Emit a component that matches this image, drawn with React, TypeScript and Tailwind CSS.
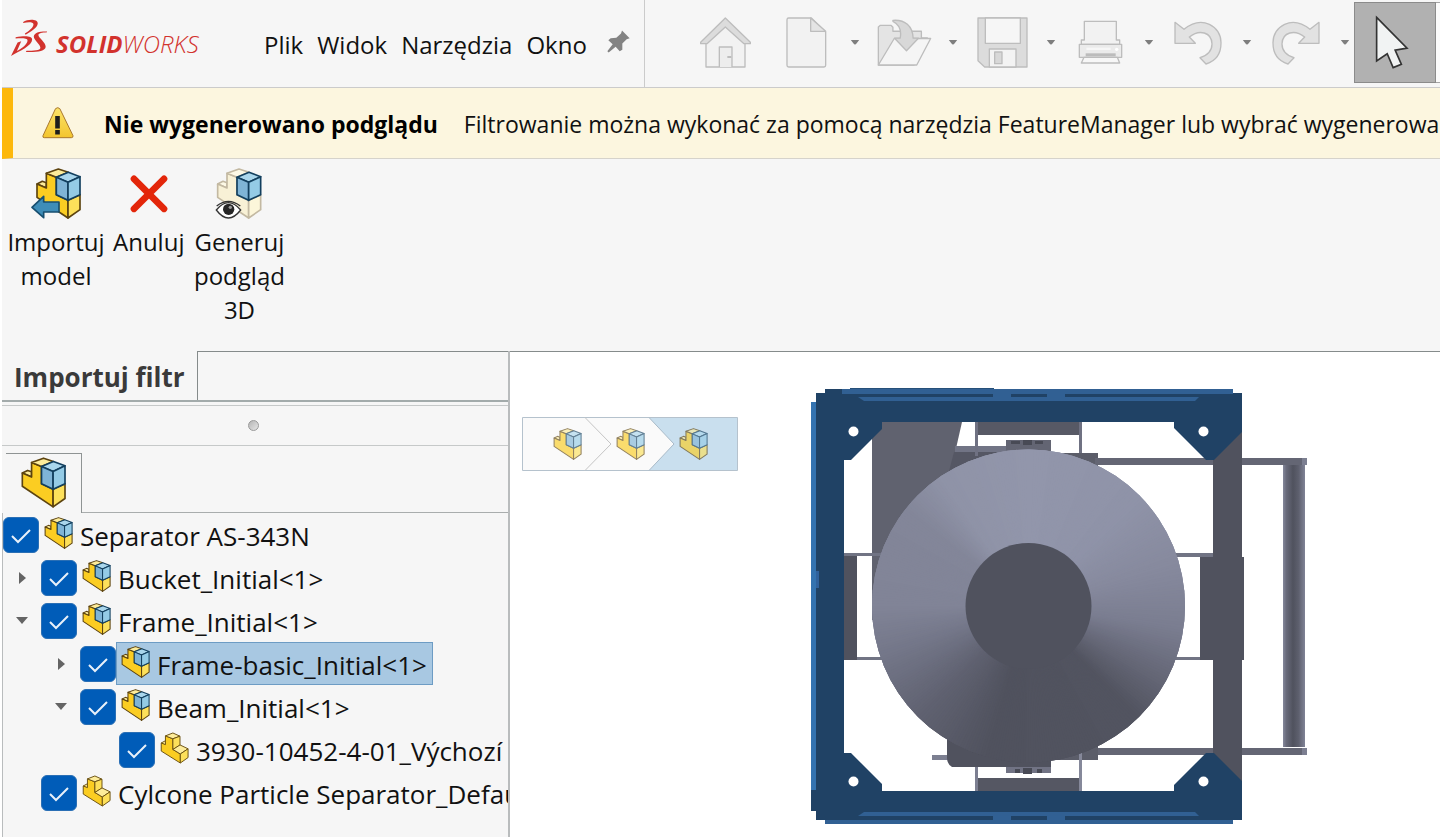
import { useState } from "react";
import type { ReactNode } from "react";

interface TreeItem {
	id: string;
	label: string;
	level: number;
	kind: "assembly" | "part";
	open?: boolean;
}

const treeItems: TreeItem[] = [
	{ id: "root", label: "Separator AS-343N", level: 0, kind: "assembly" },
	{ id: "bucket", label: "Bucket_Initial<1>", level: 1, kind: "assembly", open: false },
	{ id: "frame", label: "Frame_Initial<1>", level: 1, kind: "assembly", open: true },
	{ id: "basic", label: "Frame-basic_Initial<1>", level: 2, kind: "assembly", open: false },
	{ id: "beam", label: "Beam_Initial<1>", level: 2, kind: "assembly", open: true },
	{ id: "3930", label: "3930-10452-4-01_Výchozí", level: 3, kind: "part" },
	{ id: "cyclone", label: "Cylcone Particle Separator_Default", level: 1, kind: "part" },
];

const indents = ["pl-0", "pl-0", "pl-[39px]", "pl-[78px]"];

const AssemblyShape = ({ pale = false }: { pale?: boolean }) => {
	const line = pale ? "#c3b9a2" : "#5c430f";
	return (
		<g strokeLinejoin="round" strokeWidth="5">
			<g stroke={line}>
				<path d="M4 48 20 40 32 44V60Z" fill={pale ? "#fdf9e6" : "#fdec9a"} />
				<path d="M4 48 32 60V16L62 28V80L97 97V150L4 88Z" fill={pale ? "#f8f1d6" : "#fbcd22"} />
				<path d="M32 16 68 3 98 13 62 28Z" fill={pale ? "#fdf9e6" : "#fdec9a"} />
				<path d="M97 97 133 80V125L97 150Z" fill={pale ? "#fcf6da" : "#fde05a"} />
			</g>
			<g stroke="#123f5e">
				<path d="M62 28 98 13 133 26 97 43Z" fill="#a9d6ec" />
				<path d="M62 28 97 43V97L62 80Z" fill="#7fb4d6" />
				<path d="M97 43 133 26V80L97 97Z" fill="#94cbe6" />
			</g>
		</g>
	);
};

const AssemblyIcon = ({ className }: { className?: string }) => (
	<svg viewBox="0 0 136 153" className={className} aria-hidden="true">
		<AssemblyShape />
	</svg>
);

const PartIcon = ({ className }: { className?: string }) => (
	<svg viewBox="481 672 88 99" className={className} aria-hidden="true">
		<g stroke="#6b5212" strokeWidth="3" strokeLinejoin="round">
			<path d="M484 706 497 699 503 703 497 713Z" fill="#fdec9a" />
			<path d="M484 706 497 711V684L520 693V726L543 740V768L484 731Z" fill="#fbcd22" />
			<path d="M497 684 520 675 542 685 520 693Z" fill="#fdec9a" />
			<path d="M520 693 542 685V713L520 726Z" fill="#fde05a" />
			<path d="M520 726 542 712 567 724 543 740Z" fill="#fdec9a" />
			<path d="M543 740 567 724V751L543 768Z" fill="#fde05a" />
		</g>
	</svg>
);

const DsLogo = () => (
	<svg viewBox="30 52 115 116" className="h-[39px] w-[38px]" aria-hidden="true">
		<g fill="#d2322d">
			<path d="M70 63C83 54 114 53 114 67C114 82 90 93 77 102L75 98C88 90 101 80 101 70C100 62 84 63 70 66Z" />
			<path d="M47 109C74 104 97 104 97 116C97 135 60 150 33 166L53 125L64 121L51 151C66 143 83 130 83 119C83 112 67 112 47 113Z" />
			<path d="M142 94C126 95 117 97 116 102C115 111 138 124 138 138C137 152 111 155 78 154L80 150C101 150 122 150 122 141C122 131 102 118 102 107C103 94 124 91 142 92Z" />
		</g>
	</svg>
);

const PinIcon = () => (
	<svg viewBox="867 91 69 68" className="h-[23px] w-[23px]" aria-hidden="true">
		<path
			d="M912 92 935 115 926 118 913 131V150L905 154 893 141 872 158 868 154 884 133 871 121 878 115 895 114 909 101Z"
			fill="#838383"
		/>
	</svg>
);

const WarningIcon = () => (
	<svg viewBox="127 319 97 97" className="h-8 w-8 shrink-0" aria-hidden="true">
		<defs>
			<linearGradient id="warn" x1="0" y1="0" x2="0" y2="1">
				<stop offset="0" stopColor="#fbe36a" />
				<stop offset="1" stopColor="#f3c52e" />
			</linearGradient>
		</defs>
		<path
			d="M168 324Q175 318 181 324L221 406Q222 412 216 412H134Q128 412 130 406Z"
			fill="url(#warn)"
			stroke="#a8762c"
			strokeWidth="3"
		/>
		<path d="M167 346H181V384H167ZM167 389H181V402H167Z" fill="#1d1d1d" />
	</svg>
);

const Gray = ({ viewBox, className, children }: { viewBox: string; className: string; children: ReactNode }) => (
	<svg viewBox={viewBox} className={className} aria-hidden="true">
		<g fill="#f2f2f2" stroke="#bdbdbd" strokeWidth="4" strokeLinejoin="round">
			{children}
		</g>
	</svg>
);

const HomeIcon = () => (
	<Gray viewBox="60 50 153 153" className="h-[51px] w-[51px]">
		<path d="M78 120 136 72 195 120V200H78Z" />
		<path d="M136 53 211 126V130H192L136 80 81 130H62V126Z" fill="#dcdcdc" />
		<path d="M118 200V140H156V200" fill="#ededed" />
		<path d="M142 167H154V173H142Z" fill="#bdbdbd" stroke="none" />
	</Gray>
);

const NewIcon = () => (
	<Gray viewBox="315 50 123 153" className="h-[51px] w-[41px]">
		<path d="M323 53H391L434 95V195Q434 200 429 200H323Q318 200 318 195V58Q318 53 323 53Z" />
		<path d="M389 53V93H434Z" fill="#e4e4e4" />
	</Gray>
);

const OpenIcon = () => (
	<Gray viewBox="588 55 166 145" className="h-12 w-[55px]">
		<path d="M592 194V79L598 74H630L636 80V92H722V112H740L700 194Z" fill="#e4e4e4" />
		<path d="M592 194 640 114H750L708 194Z" fill="#f5f5f5" />
		<path d="M636 59C672 56 696 76 697 113H713L677 151 641 113H658C662 92 656 72 636 62Z" fill="#d8d8d8" />
	</Gray>
);

const SaveIcon = () => (
	<Gray viewBox="888 50 153 153" className="h-[51px] w-[51px]">
		<path d="M891 53H1038V200H911L891 181Z" fill="#dcdcdc" />
		<path d="M913 53H1018V129H913Z" fill="#f6f6f6" />
		<path d="M925 200V146H1005V200Z" fill="#f3f3f3" />
		<path d="M941 155H963V190H941Z" fill="#d8d8d8" />
	</Gray>
);

const PrintIcon = () => (
	<Gray viewBox="52 60 135 135" className="h-[45px] w-[45px]">
		<path d="M62 133V120H71V64H167V120H177V133Z" />
		<path d="M56 133H183V172H56Z" fill="#ebebeb" />
		<path d="M77 143H150V150H77Z" fill="#f7f7f7" stroke="none" />
		<path d="M75 160H165V169H75Z" fill="#bcbcbc" stroke="none" />
		<path d="M70 172H170L177 189H62Z" fill="#f7f7f7" />
		<circle cx="168" cy="148" r="5" fill="#fff" stroke="none" />
	</Gray>
);

const UndoShape = () => (
	<path
		d="M345 67 372 88C426 44 484 78 483 129C483 164 464 184 438 192L420 173C446 165 456 151 456 132C455 96 418 87 388 111L406 130H345Z"
		fill="#e2e2e2"
	/>
);

const UndoIcon = () => (
	<Gray viewBox="342 63 144 132" className="h-11 w-12">
		<UndoShape />
	</Gray>
);

const RedoIcon = () => (
	<Gray viewBox="342 63 144 132" className="h-11 w-12">
		<g transform="matrix(-1 0 0 1 828 0)">
			<UndoShape />
		</g>
	</Gray>
);

const Caret = () => (
	<svg viewBox="0 0 10 6" className="h-[5px] w-[10px] shrink-0" aria-hidden="true">
		<path d="M0 0H10L7 4Q5 7 3 4Z" fill="#7e7e7e" />
	</svg>
);

const CursorIcon = () => (
	<svg viewBox="945 44 106 164" className="h-[55px] w-[35px]" aria-hidden="true">
		<path
			d="M953 50 1045 143 1009 149 1028 192 1003 202 985 160 953 182Z"
			fill="#f1f3f3"
			stroke="#333"
			strokeWidth="5"
		/>
	</svg>
);

const ImportIcon = () => (
	<svg viewBox="88 38 153 153" className="h-[51px] w-[51px]" aria-hidden="true">
		<g transform="translate(102 38)">
			<AssemblyShape />
		</g>
		<path
			d="M91 156 126 123V140H172V170H126V187Z"
			fill="#3e8db8"
			stroke="#174f70"
			strokeWidth="5"
			strokeLinejoin="round"
		/>
	</svg>
);

const CancelIcon = () => (
	<svg viewBox="388 38 115 153" className="h-[51px] w-[38px]" aria-hidden="true">
		<path d="M400 70 491 161M491 70 400 161" stroke="#e3260a" strokeWidth="20" strokeLinecap="round" />
	</svg>
);

const PreviewIcon = () => (
	<svg viewBox="642 38 150 153" className="h-[51px] w-[50px]" aria-hidden="true">
		<g transform="translate(649 38)">
			<AssemblyShape pale />
		</g>
		<path d="M649 164Q685 120 722 164Q685 212 649 164Z" fill="#fff" stroke="#333" strokeWidth="4" />
		<path d="M650 152Q685 124 721 152" fill="none" stroke="#333" strokeWidth="4" />
		<circle cx="686" cy="162" r="17" fill="#262626" />
		<circle cx="691" cy="156" r="5" fill="#9a9a9a" />
	</svg>
);

const toolButtons = [
	{ name: "Nowy", icon: <NewIcon /> },
	{ name: "Otwórz", icon: <OpenIcon /> },
	{ name: "Zapisz", icon: <SaveIcon /> },
	{ name: "Drukuj", icon: <PrintIcon /> },
	{ name: "Cofnij", icon: <UndoIcon /> },
	{ name: "Ponów", icon: <RedoIcon /> },
];

const Header = () => (
	<header className="flex h-[88px] border-b border-[#cbcbcb] bg-[#f6f6f6]">
		<div className="flex w-[643px] shrink-0 items-center border-r border-[#cbcbcb] pl-2">
			<div className="flex w-[254px] items-center gap-2 pb-3">
				<DsLogo />
				<span className="pt-3 text-2xl leading-none italic text-[#d2322d]">
					<span className="font-bold">SOLID</span>
					<span className="font-light">WORKS</span>
				</span>
			</div>
			<nav className="flex gap-[14px] pt-[2px] text-2xl">
				<button>Plik</button>
				<button>Widok</button>
				<button>Narzędzia</button>
				<button>Okno</button>
			</nav>
			<button aria-label="Przypnij" className="ml-5 pb-1">
				<PinIcon />
			</button>
		</div>
		<div className="flex min-w-0 flex-1 overflow-hidden pl-[42px]">
			<button aria-label="Strona główna" className="flex w-[76px] shrink-0 items-center justify-center pb-[2px]">
				<HomeIcon />
			</button>
			{toolButtons.map((tool) => (
				<div key={tool.name} className="flex shrink-0 pb-[2px]">
					<button aria-label={tool.name} className="flex w-[86px] items-center justify-center">
						{tool.icon}
					</button>
					<button aria-label={`${tool.name} menu`} className="flex w-3 items-center justify-center">
						<Caret />
					</button>
				</div>
			))}
			<div className="mt-[2px] mb-1 ml-[3px] flex shrink-0">
				<button
					aria-label="Wybierz"
					className="flex w-[82px] items-center justify-center border border-[#8b8b8b] bg-[#b1b1b1] pr-2"
				>
					<CursorIcon />
				</button>
				<button
					aria-label="Wybierz menu"
					className="flex w-4 items-center justify-center border-y border-[#a5a5a5] bg-[#fbfbfb]"
				>
					<Caret />
				</button>
			</div>
		</div>
	</header>
);

const TreeRow = ({
	item,
	selected,
	checked,
	onSelect,
	onToggle,
}: {
	item: TreeItem;
	selected: boolean;
	checked: boolean;
	onSelect: () => void;
	onToggle: () => void;
}) => (
	<li className={`flex h-[43px] items-center ${indents[item.level]}`}>
		{item.level > 0 && (
			<span className="flex w-[38px] shrink-0 justify-center">
				{item.open !== undefined && (
					<button aria-label={item.open ? "Zwiń" : "Rozwiń"}>
						{item.open ? (
							<svg viewBox="0 0 12 7" className="h-[7px] w-3" aria-hidden="true">
								<path d="M0 0H12L6 7Z" fill="#646464" />
							</svg>
						) : (
							<svg viewBox="0 0 7 12" className="h-3 w-[7px]" aria-hidden="true">
								<path d="M0 0V12L7 6Z" fill="#646464" />
							</svg>
						)}
					</button>
				)}
			</span>
		)}
		<span className="relative flex shrink-0">
			<input
				type="checkbox"
				id={item.id}
				checked={checked}
				onChange={onToggle}
				className="h-9 w-9 appearance-none rounded-md border border-[#2a6fb5] checked:bg-[#005cb8]"
			/>
			{checked && (
				<svg viewBox="0 0 36 36" className="pointer-events-none absolute inset-0" aria-hidden="true">
					<path d="M9 19 15 25 27 13" fill="none" stroke="#e8f1fa" strokeWidth="2" />
				</svg>
			)}
		</span>
		<label
			htmlFor={item.id}
			onClick={onSelect}
			className={`flex h-[43px] shrink-0 items-center gap-[7px] border pr-[5px] pl-1 whitespace-nowrap ${
				selected ? "border-[#6d9cc4] bg-[#a8c8e2]" : "border-transparent"
			}`}
		>
			{item.kind === "assembly" ? (
				<AssemblyIcon className="mb-1 h-8 w-[29px]" />
			) : (
				<PartIcon className="mb-1 h-8 w-[29px]" />
			)}
			<span className="pt-1">{item.label}</span>
		</label>
	</li>
);

// tone of the cone surface by angle, clockwise from the top
const tones: [number, number[]][] = [
	[0, [146, 150, 171]],
	[45, [143, 147, 168]],
	[75, [134, 137, 157]],
	[98, [122, 125, 144]],
	[115, [104, 106, 122]],
	[135, [82, 84, 96]],
	[195, [80, 82, 94]],
	[225, [96, 98, 113]],
	[250, [115, 118, 136]],
	[270, [129, 132, 151]],
	[308, [131, 134, 153]],
	[325, [143, 147, 167]],
	[360, [146, 150, 171]],
];

const toneAt = (angle: number) => {
	const i = Math.max(1, tones.findIndex(([a]) => a >= angle));
	const [a0, c0] = tones[i - 1];
	const [a1, c1] = tones[i];
	const t = (angle - a0) / (a1 - a0);
	return `rgb(${c0.map((c, n) => Math.round(c + (c1[n] - c) * t)).join(",")})`;
};

const point = (angle: number) => {
	const rad = (angle * Math.PI) / 180;
	return `${(1028.5 + 165 * Math.sin(rad)).toFixed(2)} ${(606 - 165 * Math.cos(rad)).toFixed(2)}`;
};

const slices = Array.from({ length: 360 }, (_, i) => i);

const ModelView = () => (
	<svg
		viewBox="811 387 497 439"
		className="mt-[35px] ml-[73px] h-[439px] w-[497px] shrink-0"
		role="img"
		aria-label="Separator AS-343N"
	>
		<defs>
			<linearGradient id="roller">
				<stop offset="0" stopColor="#85889b" />
				<stop offset="0.15" stopColor="#696b7b" />
				<stop offset="0.45" stopColor="#50525e" />
				<stop offset="0.7" stopColor="#5d5f6d" />
				<stop offset="1" stopColor="#808396" />
			</linearGradient>
			<clipPath id="cone">
				<circle cx="1028.5" cy="606" r="156.5" />
			</clipPath>
		</defs>

		{/* brackets and rails behind the cone */}
		<path d="M872 422H962L950 475 880 620H872Z" fill="#60626f" />
		<path d="M955 446H1047V453H955Z" fill="#717485" />
		<path d="M954 452H1010V475H948Z" fill="#555764" />
		<path d="M975 422H1082V435H975Z" fill="#575965" />
		<path d="M975 422H978V456H975ZM1079 422H1082V460H1079Z" fill="#6f7182" />
		<path d="M1006 440H1051V452H1006Z" fill="#636573" />
		<path d="M1011 441H1020V444H1011ZM1023 440H1032V445H1023ZM1035 441H1043V444H1035Z" fill="#484a55" />
		<path d="M1040 453H1098V470H1060Z" fill="#5b5d69" />
		<path d="M1095 458H1307V465H1095ZM1085 748H1307V755H1085Z" fill="#646674" />
		<path d="M1302 458H1307V465H1302ZM1302 748H1307V755H1302Z" fill="#7c7f91" />
		<rect x="1283" y="465" width="22" height="282" fill="url(#roller)" />
		<path d="M844 553H884V556H844ZM857 657H884V660H857ZM1174 553H1213V557H1174ZM1174 657H1204V660H1174Z" fill="#717484" />
		<path d="M844 556H857V660H844ZM1200 557H1244V660H1200ZM1213 430H1242V785H1213Z" fill="#50525e" />
		<path d="M932 755H950V760H932ZM975 754H978V791H975Z" fill="#7c7f91" />
		<path d="M947 735H1051V767H952Q947 764 947 758Z" fill="#50525e" />
		<path d="M1045 740H1098V760H1045Z" fill="#5b5d69" />
		<path d="M978 778H1082V791H978Z" fill="#555763" />
		<path d="M1006 767H1051V773H1006Z" fill="#717384" />
		<path d="M1015 769H1020V773H1015ZM1023 768H1032V774H1023ZM1037 769H1042V773H1037Z" fill="#484a55" />
		<path d="M1079 753H1082V791H1079Z" fill="#85889a" />

		<g clipPath="url(#cone)">
			{slices.map((a) => (
				<path key={a} d={`M1028.5 606 ${point(a)}L${point(a + 3)}Z`} fill={toneAt(a)} />
			))}
		</g>
		<circle cx="1028.5" cy="606" r="63" fill="#50525e" />

		{/* blue frame */}
		<path d="M811 402H816V790H811Z" fill="#3473b0" />
		<path
			d="M816 393H825V389H1233V393H1242V432L1214 460H1206L1174 428V422H882V429L851 460H844V753H851L882 784V791H1174V785L1206 753H1214L1242 781V820H1233V824H825V820H816V811H811V790H816Z"
			fill="#204265"
		/>
		<path d="M842 389H1233V394H842ZM858 397H1199L1195 401H864ZM993 394H1011V397H993ZM1047 394H1065V397H1047Z" fill="#316093" />
		<path d="M825 820H1233V824H825ZM864 812H1195L1199 816H858ZM993 816H1011V820H993ZM1047 816H1065V820H1047Z" fill="#316093" />
		<path d="M850 388H994V389H850Z" fill="#264f79" />
		<path d="M816 571H819V588H816Z" fill="#2f619c" />
		<g fill="#fff">
			<circle cx="853.5" cy="431.5" r="5" />
			<circle cx="1203.5" cy="431.5" r="5" />
			<circle cx="853.5" cy="781.5" r="5" />
			<circle cx="1203.5" cy="781.5" r="5" />
		</g>
	</svg>
);

const Breadcrumb = () => (
	<nav aria-label="Ścieżka" className="relative mt-[65px] ml-3 flex h-[54px] w-[216px] shrink-0 pl-[14px]">
		<svg viewBox="0 0 216 54" className="absolute inset-0" aria-hidden="true">
			<path d="M.5.5H127L152 27 127 53.5H.5Z" fill="#fafafa" />
			<path d="M127 .5H215.5V53.5H127L152 27Z" fill="#c9dfee" />
			<path d="M.5.5H215.5V53.5H.5Z" fill="none" stroke="#b5c2cd" />
			<path d="M63 .5 89 27 63 53.5" fill="none" stroke="#c4c4c4" />
			<path d="M127 .5 152 27 127 53.5" fill="none" stroke="#a9bac8" />
		</svg>
		{["Separator AS-343N", "Frame_Initial", "Frame-basic_Initial"].map((name) => (
			<button key={name} aria-label={name} className="relative flex w-[63px] items-center justify-center">
				<AssemblyIcon className="h-8 w-[29px] opacity-65" />
			</button>
		))}
	</nav>
);

export default function App() {
	const [selected, setSelected] = useState("basic");
	const [unchecked, setUnchecked] = useState<string[]>([]);

	const toggle = (id: string) => {
		setUnchecked((prev) => (prev.includes(id) ? prev.filter((x) => x !== id) : [...prev, id]));
	};

	return (
		<div className="flex min-h-screen flex-col overflow-hidden border-l-2 border-white bg-[#f6f6f6] font-['Open_Sans','Noto_Sans',sans-serif] text-2xl text-[#111]">
			<Header />

			<div
				role="alert"
				className="flex h-[71px] items-center border-b border-l-[11px] border-b-[#d6d3cb] border-l-[#fdb80b] bg-[#fcf6df] pl-[29px] text-[23px] whitespace-nowrap"
			>
				<WarningIcon />
				<strong className="ml-[30px] pt-[2px] font-bold text-black">Nie wygenerowano podglądu</strong>
				<span className="ml-[26px] pt-[2px]">
					Filtrowanie można wykonać za pomocą narzędzia FeatureManager lub wybrać wygenerowanie
				</span>
			</div>

			<div className="flex h-48 items-start gap-[10px] pt-[9px] pl-[7px] leading-[34px]">
				<button className="flex w-[94px] flex-col items-center gap-[6px]">
					<ImportIcon />
					<span>Importuj model</span>
				</button>
				<button className="flex flex-col items-center gap-[6px]">
					<CancelIcon />
					<span>Anuluj</span>
				</button>
				<button className="flex w-[90px] flex-col items-center gap-[6px]">
					<PreviewIcon />
					<span>Generuj podgląd 3D</span>
				</button>
			</div>

			<main className="flex flex-1">
				<aside className="flex w-[508px] shrink-0 flex-col border-r-2 border-[#b9bcbd]">
					<div className="flex h-[51px] border-b-2 border-[#a3abab]">
						<h2 className="flex w-[196px] items-center border-r border-[#858b8b] pt-1 pl-3 text-[26px] font-bold whitespace-nowrap text-[#3a3a3a]">
							Importuj filtr
						</h2>
						<div className="flex-1 border-t border-[#858b8b]" />
					</div>
					<div className="mt-[3px] flex h-[41px] items-center justify-center border-y border-[#c6c9c9] pr-[3px]">
						<span className="h-[11px] w-[11px] rounded-full border border-[#999] bg-linear-to-br from-[#b5b5b5] to-[#e6e6e6]" />
					</div>
					<div className="flex h-[67px] pt-[7px]">
						<button
							aria-label="Drzewo operacji"
							className="ml-1 flex w-[76px] items-start justify-center border-t border-r border-[#8f9494] pt-[3px]"
						>
							<AssemblyIcon className="h-[51px] w-[45px]" />
						</button>
						<div className="flex-1 border-b border-[#a9adad]" />
					</div>
					<ul className="flex-1 overflow-hidden border-l border-[#b9bcbd] text-[26px]">
						{treeItems.map((item) => (
							<TreeRow
								key={item.id}
								item={item}
								selected={selected === item.id}
								checked={!unchecked.includes(item.id)}
								onSelect={() => setSelected(item.id)}
								onToggle={() => toggle(item.id)}
							/>
						))}
					</ul>
				</aside>
				<section className="flex min-w-0 flex-1 items-start overflow-hidden border-t border-[#858b8b] bg-white">
					<Breadcrumb />
					<ModelView />
				</section>
			</main>
		</div>
	);
}
